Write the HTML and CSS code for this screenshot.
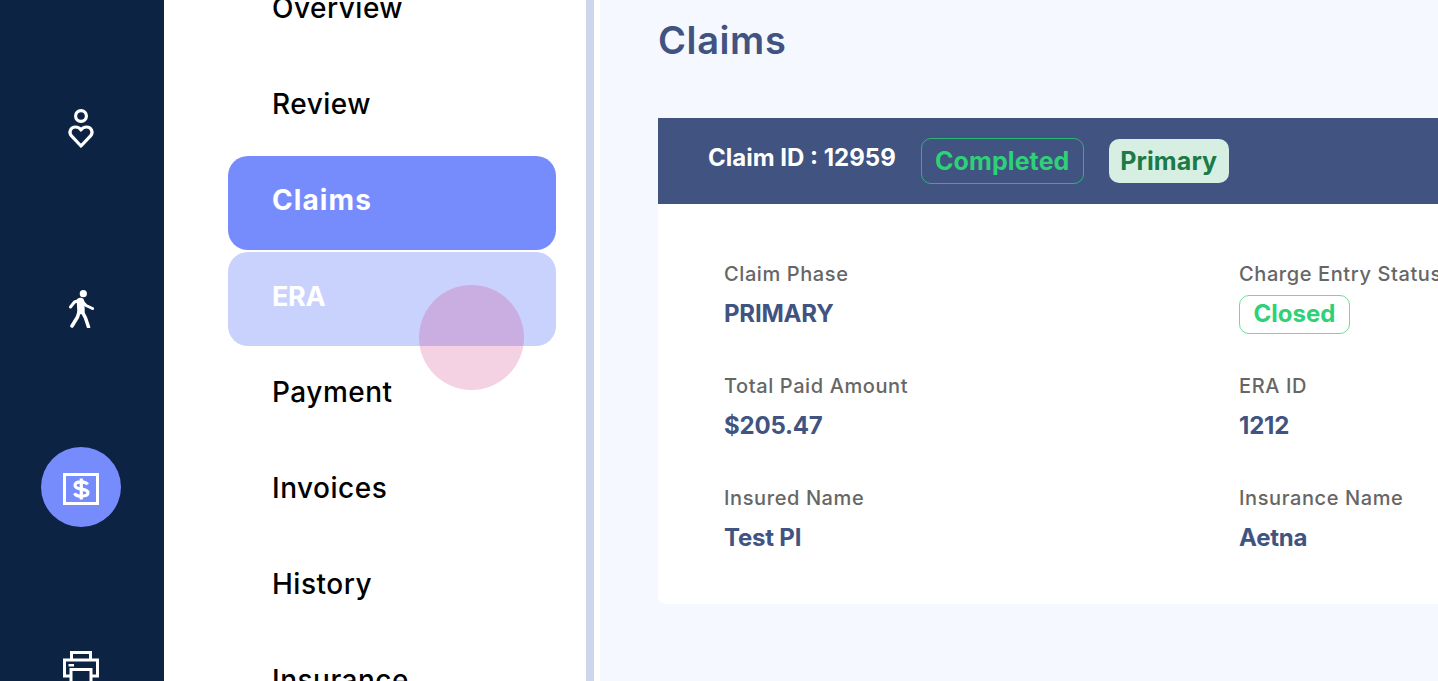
FILE: index.html
```html
<!DOCTYPE html>
<html lang="en">
<head>
<meta charset="utf-8">
<title>Claims</title>
<link rel="stylesheet" href="styles.css">
</head>
<body>
<div class="app">
  <aside class="rail">
    <div class="rail-item">
      <svg class="ico" viewBox="0 0 28 40" width="28" height="40"><circle cx="14" cy="7" r="5.400" fill="none" stroke="#fff" stroke-width="3.200"/><path d="M14 37l-9.300-9.800c-3.600-4-1-9.200 3.700-9.200 2.300 0 4.400 1 5.600 3 1.200-2 3.300-3 5.600-3 4.700 0 7.300 5.200 3.700 9.200z" fill="none" stroke="#fff" stroke-width="3.200" stroke-linejoin="round"/></svg>
    </div>
    <div class="rail-item">
      <svg class="ico" viewBox="0 0 26 38" width="26" height="38" fill="none" stroke="#fff"><circle cx="15.300" cy="3.700" r="3.600" fill="#fff" stroke="none"/><path d="M2.500 17L6.500 12l6-2M13 10l5 5.500 6.500 3" stroke-width="3" stroke-linecap="round" stroke-linejoin="round"/><path d="M12.500 11.500l.5 9" stroke-width="7.500" stroke-linecap="round"/><path d="M11 22l-1.500 5L4 36M14.500 22l3 6 3 9" stroke-width="3.500" stroke-linecap="round" stroke-linejoin="round"/></svg>
    </div>
    <div class="rail-item">
      <div class="rail-active">
        <svg class="ico ico-dollar" viewBox="0 0 36 32" width="36" height="32" fill="none" stroke="#fff"><rect x="1.500" y="1.500" width="33" height="29" stroke-width="3"/><path d="M24.500 11.500c-.8-1.700-3-2.700-6.300-2.700-3.500 0-6.200 1.200-6.200 3.600 0 5.200 13 2.200 13 7.200 0 2.500-3 3.600-6.600 3.600-3.400 0-5.900-1-6.900-3M18.300 5.500v21" stroke-width="3.200"/></svg>
      </div>
    </div>
    <div class="rail-item">
      <svg class="ico" viewBox="0 0 36 36" width="36" height="36" fill="none" stroke="#fff"><path d="M8.500 9V1.500h19V9M8 25H1.500V9h33v16H28M8 18.500h20V34.500H8z" stroke-width="3"/><rect x="5.500" y="13" width="5.500" height="2.500" fill="#fff" stroke="none"/></svg>
    </div>
  </aside>
  <nav class="submenu">
    <a class="nav-item">Overview</a>
    <a class="nav-item">Review</a>
    <a class="nav-item is-active">Claims</a>
    <a class="nav-item is-hover">ERA</a>
    <a class="nav-item">Payment</a>
    <a class="nav-item">Invoices</a>
    <a class="nav-item">History</a>
    <a class="nav-item">Insurance</a>
    <span class="ripple"></span>
  </nav>
  <div class="divider"></div>
  <main class="main">
    <h1 class="title">Claims</h1>
    <section class="card">
      <header class="card-head">
        <span class="claim-id">Claim ID : 12959</span>
        <span class="badge badge-outline">Completed</span>
        <span class="badge badge-soft">Primary</span>
      </header>
      <div class="fields">
        <div class="field"><div class="label">Claim Phase</div><div class="value">PRIMARY</div></div>
        <div class="field"><div class="label">Charge Entry Status</div><div class="value"><span class="badge-closed">Closed</span></div></div>
        <div class="field"><div class="label">Total Paid Amount</div><div class="value">$205.47</div></div>
        <div class="field"><div class="label">ERA ID</div><div class="value">1212</div></div>
        <div class="field"><div class="label">Insured Name</div><div class="value">Test PI</div></div>
        <div class="field"><div class="label">Insurance Name</div><div class="value">Aetna</div></div>
      </div>
    </section>
  </main>
</div>
</body>
</html>
```
FILE: styles.css
```css
* { box-sizing: border-box; }
html, body { margin: 0; height: 100%; overflow: hidden; }
body { font-family: "Inter", "Liberation Sans", sans-serif; background: #f5f8fe; }
.app { display: flex; width: 1438px; height: 681px; overflow: hidden; }

.rail { flex: 0 0 164px; background: #0d2344; display: flex; flex-direction: column; align-items: center; padding-right: 2px; overflow: hidden; }
.rail-item { flex: 0 0 180px; width: 100%; display: flex; align-items: center; justify-content: center; }
.rail-item:first-child { margin-top: 39px; }
.rail-active { width: 80px; height: 80px; margin-top: -4px; padding-top: 3px; border-radius: 50%; background: #778cfc; display: flex; align-items: center; justify-content: center; }
.ico { display: block; }

.submenu { position: relative; flex: 0 0 422px; background: #fff; padding: 0 30px 0 64px; overflow: hidden; }
.nav-item { display: block; height: 94px; margin: 0 0 2px; padding: 28px 0 0 44px; border-radius: 20px; font-size: 28px; line-height: 32px; font-weight: 500; color: #000; letter-spacing: 0.5px; }
.nav-item:first-child { margin-top: -36px; }
.is-active { background: #778cfc; color: #fff; font-weight: 700; letter-spacing: 1.1px; }
.is-hover { background: #c9d2fd; color: #fff; font-weight: 700; font-size: 27px; letter-spacing: -0.3px; padding-top: 29px; }
.ripple { position: absolute; left: 255px; top: 285px; width: 105px; height: 105px; border-radius: 50%; background: rgba(209, 61, 140, 0.24); }

.divider { flex: 0 0 14px; background: #fff; border-left: 8px solid #cdd6ea; }

.main { flex: 1 1 auto; padding: 0 0 0 58px; min-width: 0; }
.title { margin: 18px 0 0; font-size: 38px; line-height: 44px; font-weight: 600; color: #415380; letter-spacing: 0.6px; }
.card { margin-top: 56px; width: 900px; height: 486px; background: #fff; border-radius: 0 0 8px 8px; }
.card-head { height: 86px; background: #415380; display: flex; align-items: center; padding: 0 0 0 50px; }
.claim-id { font-size: 24px; line-height: 30px; font-weight: 700; color: #fff; margin-top: -7px; letter-spacing: 0; }
.badge { display: inline-flex; align-items: center; justify-content: center; font-size: 25px; font-weight: 700; border-radius: 10px; letter-spacing: 0.1px; }
.badge-outline { margin-left: 25px; width: 163px; height: 46px; color: #2ed177; border: 1px solid #2fb573; }
.badge-soft { margin-left: 25px; width: 120px; height: 44px; background: #d6efe2; color: #1b7a46; }
.fields { display: grid; grid-template-columns: 515px 1fr; grid-auto-rows: 112px; padding: 58px 0 0 66px; }
.label { font-size: 20px; line-height: 24px; font-weight: 500; color: #666; letter-spacing: 0.6px; }
.value { margin-top: 12px; font-size: 24px; line-height: 32px; font-weight: 700; color: #415380; letter-spacing: -0.2px; }
.badge-closed { display: inline-flex; align-items: center; justify-content: center; width: 111px; height: 39px; border: 1px solid #6fdc9f; border-radius: 10px; color: #2ed177; font-size: 24px; font-weight: 700; letter-spacing: 0; margin-top: -6px; }
```
